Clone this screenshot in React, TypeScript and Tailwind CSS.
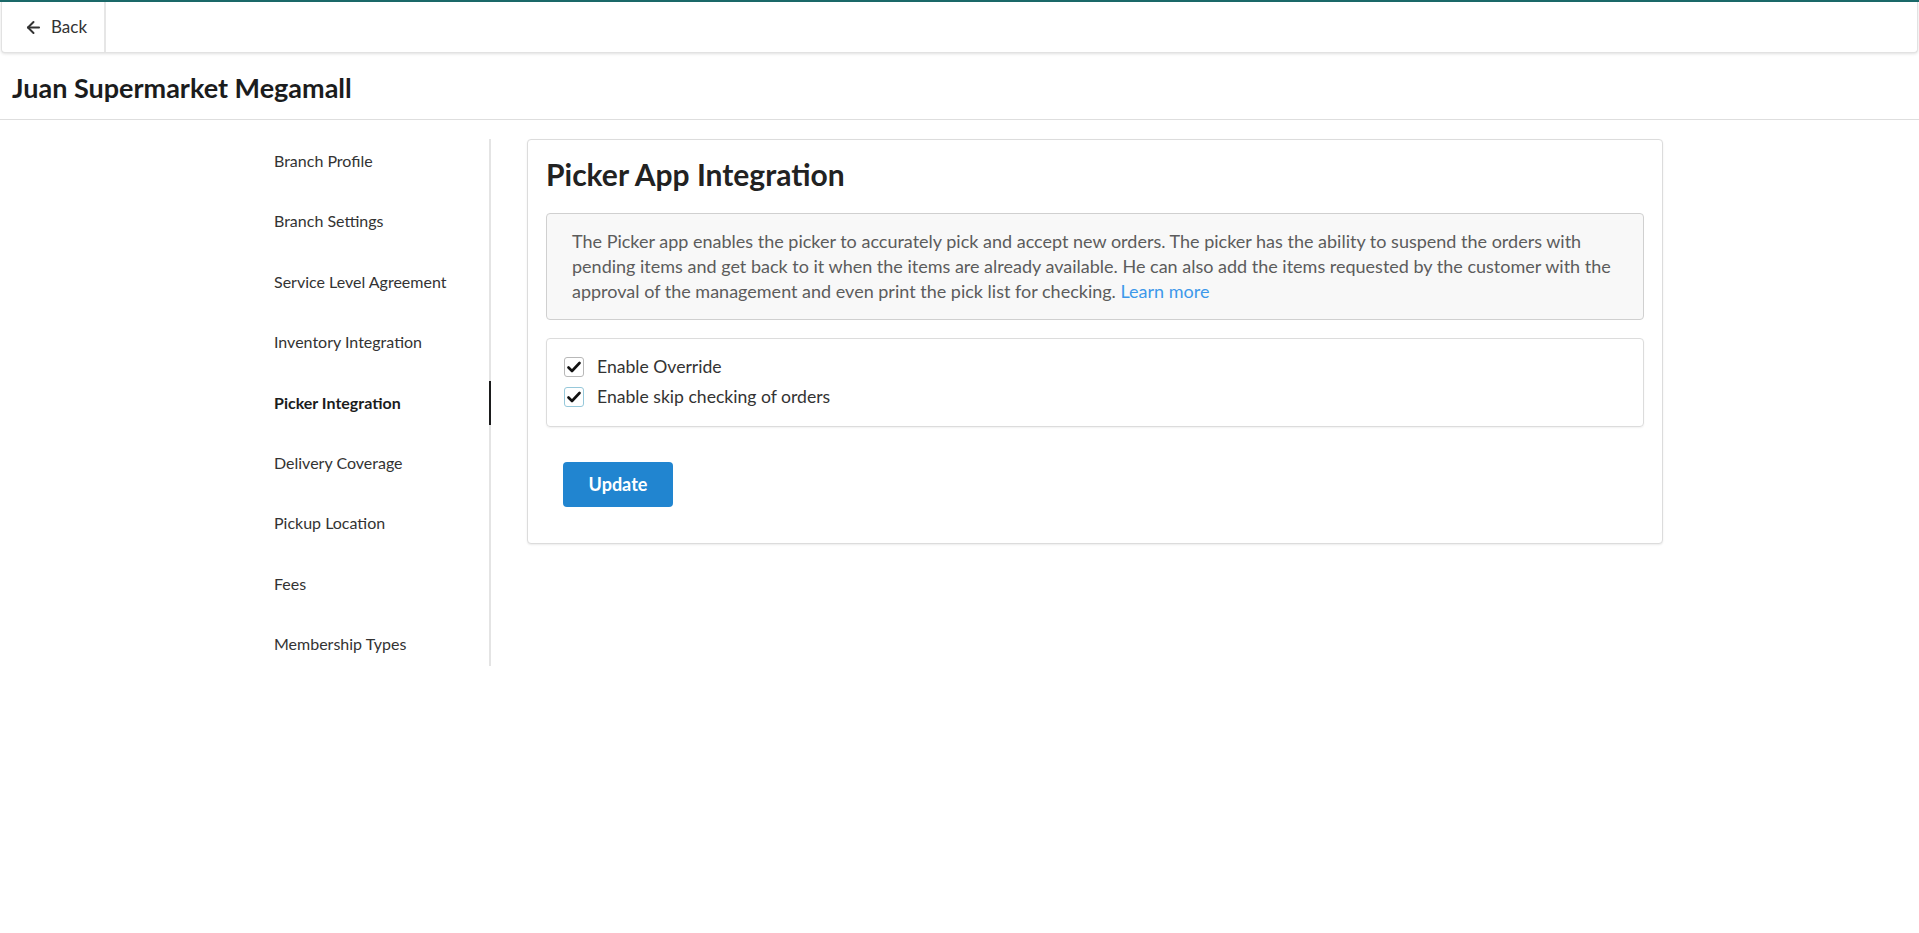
import { ArrowLeft } from "lucide-react";

const navItems = [
  "Branch Profile",
  "Branch Settings",
  "Service Level Agreement",
  "Inventory Integration",
  "Picker Integration",
  "Delivery Coverage",
  "Pickup Location",
  "Fees",
  "Membership Types",
];

function Check({ focused }: { focused?: boolean }) {
  return (
    <span
      className={`flex h-[20px] w-[20px] shrink-0 items-center justify-center rounded-[3px] border bg-white ${
        focused ? "border-[#96c8da]" : "border-[#b8b8b8]"
      }`}
    >
      <svg width="14" height="12" viewBox="0 0 14 12">
        <path d="M1.5 6.5 L5 10 L12.5 2" fill="none" stroke="#111" strokeWidth="2.6" strokeLinecap="round" strokeLinejoin="round" />
      </svg>
    </span>
  );
}

export default function App() {
  return (
    <div className="min-h-screen bg-white text-[#222] font-['Lato',sans-serif]">
      {/* Top bar */}
      <div className="border-t-2 border-[#1b6a6a]">
        <div className="mx-px flex h-[51px] rounded-b-[4px] border border-t-0 border-[#e2e2e2] bg-white shadow-[0_1px_3px_rgba(0,0,0,0.12)]">
          <button className="flex w-[104px] items-center gap-[8px] border-r-2 border-[#e6e6e6] pl-[22px] text-[17px] text-[#333]">
            <ArrowLeft size={19} strokeWidth={2.5} />
            Back
          </button>
        </div>
      </div>

      {/* Page title */}
      <div className="flex h-[67px] items-center border-b border-[#dedede] pl-[12px] pt-[4px]">
        <h1 className="text-[27px] font-bold text-[#1b1c1d]">Juan Supermarket Megamall</h1>
      </div>

      <div className="flex pt-[19px]">
        {/* Sidebar */}
        <div className="ml-[259px] flex w-[232px] flex-col gap-[16.4px] border-r-2 border-[#e4e4e4]">
          {navItems.map((item) => (
            <div
              key={item}
              className={`-mr-[2px] flex h-[44px] items-center pl-[15px] text-[16px] ${
                item === "Picker Integration"
                  ? "border-r-2 border-[#1b1c1d] font-bold text-[#1b1c1d]"
                  : "text-[#333]"
              }`}
            >
              {item}
            </div>
          ))}
        </div>

        {/* Content card */}
        <div className="ml-[36px] self-start w-[1136px] rounded-[4px] border border-[#dcdcdc] bg-white px-[18px] pt-[16px] pb-[36px] shadow-[0_1px_2px_rgba(0,0,0,0.08)]">
          <h2 className="text-[30px] font-bold leading-[36px] text-[#222]">Picker App Integration</h2>

          <div className="mt-[21px] rounded-[4px] border border-[#d0d0d0] bg-[#f8f8f8] px-[25px] py-[15px] text-[18px] leading-[25px] text-[#5c5c5c]">
            The Picker app enables the picker to accurately pick and accept new orders. The picker has the ability to
            suspend the orders with pending items and get back to it when the items are already available. He can also
            add the items requested by the customer with the approval of the management and even print the pick list for
            checking. <a className="text-[#3d98ea]">Learn more</a>
          </div>

          <div className="mt-[18px] flex flex-col gap-[10px] rounded-[4px] border border-[#dcdcdc] pl-[17px] pt-[18px] pb-[19px] shadow-[0_1px_2px_rgba(0,0,0,0.06)]">
            <label className="flex h-[20px] items-center gap-[13px] text-[17.6px] text-[#333]">
              <Check />
              Enable Override
            </label>
            <label className="flex h-[20px] items-center gap-[13px] text-[17.6px] text-[#333]">
              <Check focused />
              Enable skip checking of orders
            </label>
          </div>

          <button className="ml-[17px] mt-[35px] h-[45px] w-[110px] rounded-[4px] bg-[#2185d0] text-[18px] font-bold text-white">
            Update
          </button>
        </div>
      </div>
    </div>
  );
}
